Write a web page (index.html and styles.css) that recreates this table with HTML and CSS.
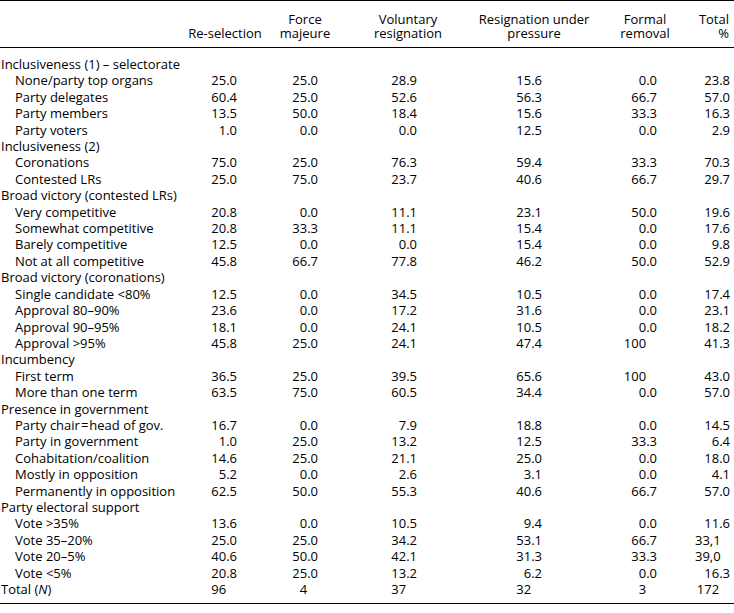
FILE: index.html
```html
<!DOCTYPE html>
<html>
<head>
<meta charset="utf-8">
<link rel="stylesheet" href="styles.css">
</head>
<body>
<table class="tbl">
<colgroup>
<col class="c0"><col class="c1"><col class="c2"><col class="c3"><col class="c4"><col class="c5"><col class="c6">
</colgroup>
<thead>
<tr>
<th></th>
<th class="h h1">Re-selection</th>
<th class="h h2"><span class="hl">Force</span><span class="hl">majeure</span></th>
<th class="h h3"><span class="hl">Voluntary</span><span class="hl">resignation</span></th>
<th class="h h4"><span class="hl">Resignation under</span><span class="hl">pressure</span></th>
<th class="h h5"><span class="hl">Formal</span><span class="hl">removal</span></th>
<th class="h h6"><span class="hl">Total</span><span class="hl">%</span></th>
</tr>
</thead>
<tbody>
<tr class="first"><td class="grp">Inclusiveness (1) – selectorate</td><td></td><td></td><td></td><td></td><td></td><td></td></tr>
<tr><td class="sub">None/party top organs</td><td class="n n1">25.0</td><td class="n n2">25.0</td><td class="n n3">28.9</td><td class="n n4">15.6</td><td class="n n5">0.0</td><td class="n n6">23.8</td></tr>
<tr><td class="sub">Party delegates</td><td class="n n1">60.4</td><td class="n n2">25.0</td><td class="n n3">52.6</td><td class="n n4">56.3</td><td class="n n5">66.7</td><td class="n n6">57.0</td></tr>
<tr><td class="sub">Party members</td><td class="n n1">13.5</td><td class="n n2">50.0</td><td class="n n3">18.4</td><td class="n n4">15.6</td><td class="n n5">33.3</td><td class="n n6">16.3</td></tr>
<tr><td class="sub">Party voters</td><td class="n n1">1.0</td><td class="n n2">0.0</td><td class="n n3">0.0</td><td class="n n4">12.5</td><td class="n n5">0.0</td><td class="n n6">2.9</td></tr>
<tr><td class="grp">Inclusiveness (2)</td><td></td><td></td><td></td><td></td><td></td><td></td></tr>
<tr><td class="sub">Coronations</td><td class="n n1">75.0</td><td class="n n2">25.0</td><td class="n n3">76.3</td><td class="n n4">59.4</td><td class="n n5">33.3</td><td class="n n6">70.3</td></tr>
<tr><td class="sub">Contested LRs</td><td class="n n1">25.0</td><td class="n n2">75.0</td><td class="n n3">23.7</td><td class="n n4">40.6</td><td class="n n5">66.7</td><td class="n n6">29.7</td></tr>
<tr><td class="grp">Broad victory (contested LRs)</td><td></td><td></td><td></td><td></td><td></td><td></td></tr>
<tr><td class="sub">Very competitive</td><td class="n n1">20.8</td><td class="n n2">0.0</td><td class="n n3">11.1</td><td class="n n4">23.1</td><td class="n n5">50.0</td><td class="n n6">19.6</td></tr>
<tr><td class="sub">Somewhat competitive</td><td class="n n1">20.8</td><td class="n n2">33.3</td><td class="n n3">11.1</td><td class="n n4">15.4</td><td class="n n5">0.0</td><td class="n n6">17.6</td></tr>
<tr><td class="sub">Barely competitive</td><td class="n n1">12.5</td><td class="n n2">0.0</td><td class="n n3">0.0</td><td class="n n4">15.4</td><td class="n n5">0.0</td><td class="n n6">9.8</td></tr>
<tr><td class="sub">Not at all competitive</td><td class="n n1">45.8</td><td class="n n2">66.7</td><td class="n n3">77.8</td><td class="n n4">46.2</td><td class="n n5">50.0</td><td class="n n6">52.9</td></tr>
<tr><td class="grp">Broad victory (coronations)</td><td></td><td></td><td></td><td></td><td></td><td></td></tr>
<tr><td class="sub">Single candidate &lt;80%</td><td class="n n1">12.5</td><td class="n n2">0.0</td><td class="n n3">34.5</td><td class="n n4">10.5</td><td class="n n5">0.0</td><td class="n n6">17.4</td></tr>
<tr><td class="sub">Approval 80–90%</td><td class="n n1">23.6</td><td class="n n2">0.0</td><td class="n n3">17.2</td><td class="n n4">31.6</td><td class="n n5">0.0</td><td class="n n6">23.1</td></tr>
<tr><td class="sub">Approval 90–95%</td><td class="n n1">18.1</td><td class="n n2">0.0</td><td class="n n3">24.1</td><td class="n n4">10.5</td><td class="n n5">0.0</td><td class="n n6">18.2</td></tr>
<tr><td class="sub">Approval &gt;95%</td><td class="n n1">45.8</td><td class="n n2">25.0</td><td class="n n3">24.1</td><td class="n n4">47.4</td><td class="n n5">100<span class="pad">.0</span></td><td class="n n6">41.3</td></tr>
<tr><td class="grp">Incumbency</td><td></td><td></td><td></td><td></td><td></td><td></td></tr>
<tr><td class="sub">First term</td><td class="n n1">36.5</td><td class="n n2">25.0</td><td class="n n3">39.5</td><td class="n n4">65.6</td><td class="n n5">100<span class="pad">.0</span></td><td class="n n6">43.0</td></tr>
<tr><td class="sub">More than one term</td><td class="n n1">63.5</td><td class="n n2">75.0</td><td class="n n3">60.5</td><td class="n n4">34.4</td><td class="n n5">0.0</td><td class="n n6">57.0</td></tr>
<tr><td class="grp">Presence in government</td><td></td><td></td><td></td><td></td><td></td><td></td></tr>
<tr><td class="sub">Party chair<span class="eq">=</span>head of gov.</td><td class="n n1">16.7</td><td class="n n2">0.0</td><td class="n n3">7.9</td><td class="n n4">18.8</td><td class="n n5">0.0</td><td class="n n6">14.5</td></tr>
<tr><td class="sub">Party in government</td><td class="n n1">1.0</td><td class="n n2">25.0</td><td class="n n3">13.2</td><td class="n n4">12.5</td><td class="n n5">33.3</td><td class="n n6">6.4</td></tr>
<tr><td class="sub">Cohabitation/coalition</td><td class="n n1">14.6</td><td class="n n2">25.0</td><td class="n n3">21.1</td><td class="n n4">25.0</td><td class="n n5">0.0</td><td class="n n6">18.0</td></tr>
<tr><td class="sub">Mostly in opposition</td><td class="n n1">5.2</td><td class="n n2">0.0</td><td class="n n3">2.6</td><td class="n n4">3.1</td><td class="n n5">0.0</td><td class="n n6">4.1</td></tr>
<tr><td class="sub">Permanently in opposition</td><td class="n n1">62.5</td><td class="n n2">50.0</td><td class="n n3">55.3</td><td class="n n4">40.6</td><td class="n n5">66.7</td><td class="n n6">57.0</td></tr>
<tr><td class="grp">Party electoral support</td><td></td><td></td><td></td><td></td><td></td><td></td></tr>
<tr><td class="sub">Vote &gt;35%</td><td class="n n1">13.6</td><td class="n n2">0.0</td><td class="n n3">10.5</td><td class="n n4">9.4</td><td class="n n5">0.0</td><td class="n n6">11.6</td></tr>
<tr><td class="sub">Vote 35–20%</td><td class="n n1">25.0</td><td class="n n2">25.0</td><td class="n n3">34.2</td><td class="n n4">53.1</td><td class="n n5">66.7</td><td class="l6">33,1</td></tr>
<tr><td class="sub">Vote 20–5%</td><td class="n n1">40.6</td><td class="n n2">50.0</td><td class="n n3">42.1</td><td class="n n4">31.3</td><td class="n n5">33.3</td><td class="l6">39,0</td></tr>
<tr><td class="sub">Vote &lt;5%</td><td class="n n1">20.8</td><td class="n n2">25.0</td><td class="n n3">13.2</td><td class="n n4">6.2</td><td class="n n5">0.0</td><td class="n n6">16.3</td></tr>
<tr class="last"><td class="grp">Total (<i>N</i>)</td><td class="n n1">96<span class="pad">.0</span></td><td class="n n2">4<span class="pad">.0</span></td><td class="n n3">37<span class="pad">.0</span></td><td class="n n4">32<span class="pad">.0</span></td><td class="n n5">3<span class="pad">.0</span></td><td class="n n6">172<span class="pad">.0</span></td></tr>
</tbody>
</table>
</body>
</html>
```
FILE: styles.css
```css
html, body {
  margin: 0;
  padding: 0;
  background: #ffffff;
}
body {
  font-family: "Open Sans", "Noto Sans", sans-serif;
  font-size: 13px;
  color: #000000;
}
.tbl {
  width: 734px;
  table-layout: fixed;
  border-collapse: collapse;
  border-top: 1.5px solid #000;
  border-bottom: 1.5px solid #000;
}
.c0 { width: 185px; }
.c1 { width: 80px; }
.c2 { width: 80px; }
.c3 { width: 126px; }
.c4 { width: 126px; }
.c5 { width: 96px; }
.c6 { width: 41px; }
thead tr {
  border-bottom: 1px solid #000;
}
th {
  font-weight: normal;
  padding: 12px 0 7px 0;
  vertical-align: bottom;
  text-align: center;
  white-space: nowrap;
}
.hl {
  display: block;
  height: 13.5px;
  line-height: 13.5px;
}
.h1 { line-height: 13.5px; }
.h6 {
  text-align: right;
  padding-right: 5px;
}
td {
  padding: 0;
  line-height: 16.4px;
  height: 16.4px;
  white-space: nowrap;
}
tbody tr.first td { padding-top: 8px; }
tbody tr.last td { padding-bottom: 6px; }
.grp { padding-left: 1px; }
.sub { padding-left: 15px; }
.eq { margin: 0 1px; }
.n { text-align: right; }
.n1 { padding-right: 28px; }
.n2 { padding-right: 27px; }
.n3 { padding-right: 54px; }
.n4 { padding-right: 55px; }
.n5 { padding-right: 36px; }
.n6 { padding-right: 4px; }
.l6 { text-align: left; padding-left: 2px; }
.pad { visibility: hidden; }
i { font-style: italic; }
```
